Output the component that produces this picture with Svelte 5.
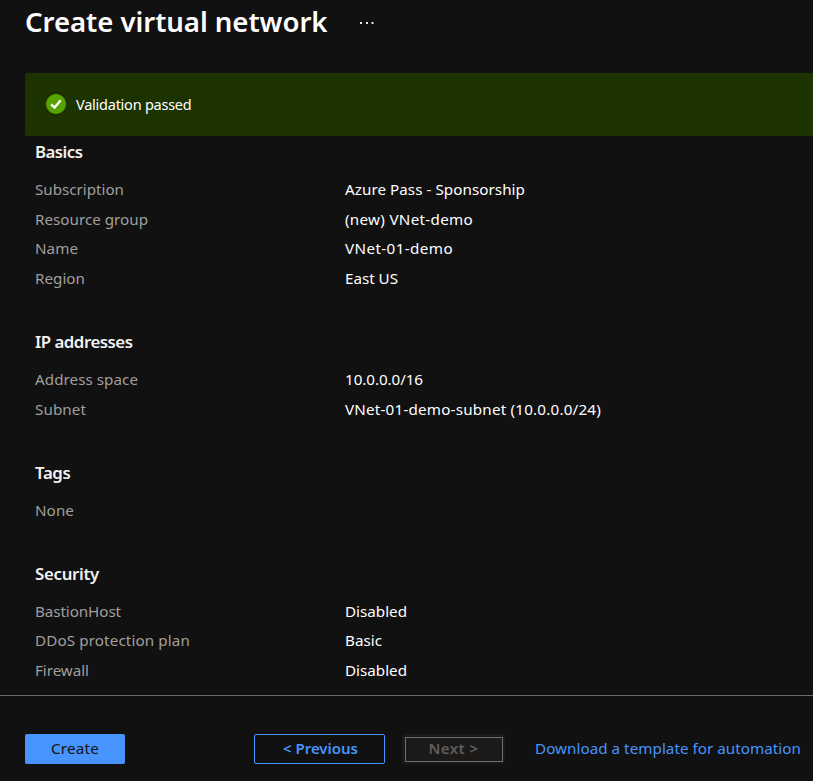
<script>
  const sections = [
    { title: 'Basics', tw: 47.5, rows: [
      ['Subscription', 89, 'Azure Pass - Sponsorship', 180],
      ['Resource group', 113, '(new) VNet-demo', 128],
      ['Name', 43, 'VNet-01-demo', 108],
      ['Region', 50, 'East US', 53],
    ] },
    { title: 'IP addresses', tw: 97.5, rows: [
      ['Address space', 103, '10.0.0.0/16', 78],
      ['Subnet', 51, 'VNet-01-demo-subnet (10.0.0.0/24)', 256],
    ] },
    { title: 'Tags', tw: 35.5, rows: [['None', 39, '', 0]] },
    { title: 'Security', tw: 64, rows: [
      ['BastionHost', 86, 'Disabled', 62],
      ['DDoS protection plan', 155, 'Basic', 37],
      ['Firewall', 54, 'Disabled', 62],
    ] },
  ];

  // Adjusts tracking so that a label takes up the given width.
  function fit(node, width) {
    const n = node.textContent.length;
    if (!n) return;
    const natural = node.getBoundingClientRect().width;
    node.style.letterSpacing = `${(width - natural) / n}px`;
  }
</script>

<div class="page">
  <header>
    <h1><span use:fit={302.5}>Create virtual network</span></h1>
    <button class="more" aria-label="More">
      <svg width="16" height="4" viewBox="0 0 16 4" fill="#e8e8e8">
        <rect x="1" y="1" width="2" height="2" /><rect x="7" y="1" width="2" height="2" /><rect x="12.5" y="1" width="2" height="2" />
      </svg>
    </button>
  </header>

  <div class="banner">
    <svg width="20" height="20" viewBox="0 0 20 20">
      <circle cx="10" cy="10" r="10" fill="#57a300" />
      <path d="M5.2 10.3 8.6 13.6 14.7 6.2" fill="none" stroke="#fff" stroke-width="2.3" />
    </svg>
    <span use:fit={115.5}>Validation passed</span>
  </div>

  <main>
    {#each sections as s}
      <section>
        <h2><span use:fit={s.tw}>{s.title}</span></h2>
        {#each s.rows as [label, lw, value, vw]}
          <div class="row">
            <div class="label"><span use:fit={lw}>{label}</span></div>
            <div class="value"><span use:fit={vw}>{value}</span></div>
          </div>
        {/each}
      </section>
    {/each}
  </main>

  <footer>
    <button class="create"><span use:fit={48}>Create</span></button>
    <button class="previous"><span use:fit={77}>&lt; Previous</span></button>
    <button class="next" disabled><span use:fit={50}>Next &gt;</span></button>
    <a href="#template"><span use:fit={266}>Download a template for automation</span></a>
  </footer>
</div>

<style>
  :global(body) { background: #111; }
  .page {
    box-sizing: border-box;
    height: 781px;
    display: flex;
    flex-direction: column;
    overflow: hidden;
    background: #111;
    color: #fff;
    font: 15.2px/20px "Segoe UI", "Noto Sans", sans-serif;
    white-space: nowrap;
  }
  header {
    display: flex;
    align-items: center;
    height: 42px;
    padding-left: 25px;
    margin-bottom: 31px;
    flex: none;
  }
  h1 { margin: 0; width: 334px; font-size: 27.6px; line-height: 40px; font-weight: 600; }
  button { font: inherit; padding: 0; border: 0; background: none; color: inherit; box-sizing: border-box; }
  .more { display: flex; width: 16px; margin-top: 4px; }
  .banner {
    flex: none;
    display: flex;
    align-items: center;
    gap: 10px;
    box-sizing: border-box;
    height: 63px;
    margin-left: 25px;
    padding-left: 21px;
    padding-bottom: 1px;
    background: #1c3300;
    border-radius: 2px 0 0 2px;
    font-size: 14.5px;
  }
  main { flex: 1; min-height: 0; padding: 1px 0 0 35px; }
  section { margin-bottom: 33.4px; }
  h2 { margin: 0 0 8.1px; font-size: 16.8px; line-height: 30px; font-weight: 600; color: #f3f2f1; }
  .row { display: flex; height: 29.6px; line-height: 29.6px; }
  .label { width: 310px; color: #a19f9d; }
  footer {
    flex: none;
    box-sizing: border-box;
    display: flex;
    align-items: center;
    height: 86px;
    padding: 21px 0 0 25px;
    border-top: 1px solid #6b6b6b;
  }
  footer button { height: 30px; border-radius: 2px; }
  footer span { display: block; margin: 0 auto; width: max-content; padding-bottom: 2px; }
  .create { width: 100px; background: #4894fe; color: #111; }
  .previous { width: 131px; margin-left: 129px; border: 1px solid #4894fe; color: #4894fe; font-size: 15px; font-weight: 600; }
  .previous span { padding-left: 2px; }
  .next {
    position: relative;
    width: 103px;
    margin-left: 17px;
    background: #1b1a19;
    color: #605e5c;
    font-size: 15px;
    font-weight: 600;
  }
  .next::after {
    content: "";
    position: absolute;
    box-sizing: border-box;
    inset: 3px 2px 2px 3px;
    border: 1px solid #6e6e6e;
  }
  a { margin-left: 30px; color: #4894fe; text-decoration: none; }
</style>
